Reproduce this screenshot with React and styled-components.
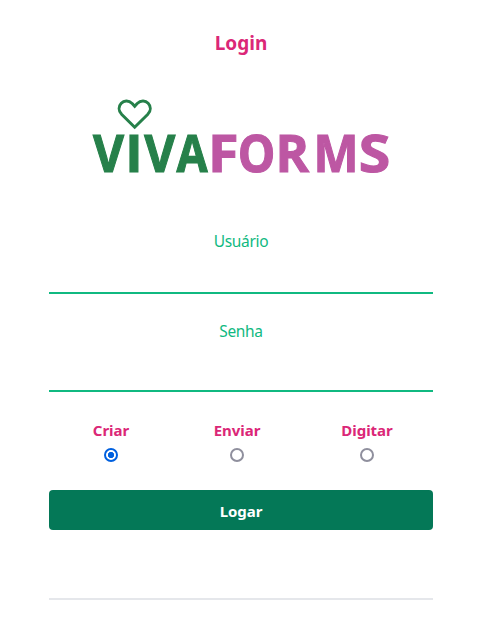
import React from "react";
import styled, { createGlobalStyle } from "styled-components";

const GlobalStyle = createGlobalStyle`
  *, *::before, *::after { box-sizing: border-box; }
  body {
    margin: 0;
    background: #fff;
    font-family: "Noto Sans", "Segoe UI", sans-serif;
    font-size: 15.5px;
    line-height: 24px;
  }
`;

const Page = styled.main`
  display: flex;
  flex-direction: column;
  width: 384px;
  height: 635px;
  margin-left: 49px;
  padding-top: 29px;
`;

const Title = styled.h1`
  margin: 0 0 40px;
  color: #db2777;
  font-size: 19px;
  font-weight: 700;
  line-height: 28px;
  letter-spacing: 0;
  text-align: center;
`;

const Logo = styled.svg`
  display: block;
  width: 310px;
  height: 100px;
  margin: 0 0 32px 42px;
  overflow: visible;
  font-family: "Open Sans", sans-serif;
  font-size: 52.5px;
  font-weight: 700;
`;

const Form = styled.form`
  display: flex;
  flex-direction: column;
`;

const Field = styled.label`
  display: flex;
  flex-direction: column;
  height: ${(p) => p.$height}px;
  margin-bottom: ${(p) => p.$gap}px;
  color: #10b981;
  text-align: center;
  letter-spacing: -0.35px;
`;

const Input = styled.input`
  flex: 1;
  min-height: 0;
  width: 100%;
  border: 0;
  border-bottom: 2px solid #10b981;
  outline: 0;
  padding: 8px;
  background: transparent;
  font: inherit;
`;

const Options = styled.div`
  display: grid;
  grid-template-columns: 124px 128px 132px;
  margin-bottom: 28px;
`;

const Option = styled.label`
  display: flex;
  flex-direction: column;
  align-items: center;
  gap: 6px;
  color: #db2777;
  font-size: 15px;
  font-weight: 700;
  line-height: 24px;
  letter-spacing: -0.05px;
`;

const Radio = styled.input`
  appearance: none;
  width: 14px;
  height: 14px;
  margin: 0;
  border: 2px solid ${(p) => (p.checked ? "#0060df" : "#8f8f9d")};
  border-radius: 50%;
  background: ${(p) =>
    p.checked ? "radial-gradient(circle, #0060df 2.8px, #fff 3.5px)" : "#fff"};
`;

const Submit = styled.button`
  height: 40px;
  border: 0;
  border-radius: 4px;
  padding: 1px 0 0;
  background: #047857;
  color: #fff;
  font: inherit;
  font-size: 15px;
  font-weight: 700;
  letter-spacing: -0.05px;
`;

const Divider = styled.hr`
  width: 100%;
  margin: 68px 0 0;
  border: 0;
  border-top: 2px solid #e5e7eb;
`;

const GREEN = "#26804a";
const PINK = "#bd57a3";

const LETTERS = [
  { char: "V", x: 2.1, scale: 0.91, color: GREEN },
  { char: "I", x: 34.3, scale: 1, color: GREEN },
  { char: "V", x: 53.2, scale: 0.91, color: GREEN },
  { char: "A", x: 85.4, scale: 0.86, color: GREEN },
  { char: "F", x: 116.9, scale: 1.06, color: PINK },
  { char: "O", x: 146.7, scale: 0.9, color: PINK },
  { char: "R", x: 184.5, scale: 0.97, color: PINK },
  { char: "M", x: 222.6, scale: 0.91, color: PINK },
  { char: "S", x: 267.8, scale: 1.09, color: PINK },
];

const MODES = ["Criar", "Enviar", "Digitar"];

export default function App() {
  const [mode, setMode] = React.useState("Criar");
  return (
    <>
      <GlobalStyle />
      <Page>
        <Title>Login</Title>
        <Logo viewBox="0 0 310 100" role="img" aria-label="VIVAFORMS">
          <path
            d="M43.7 30.2 L30.8 17.5 C23.2 9.6 33.5-.8 41.2 6.5 L43.7 9.2 L46.2 6.5 C53.9-.8 64.2 9.6 56.6 17.5 Z"
            fill="none"
            stroke={GREEN}
            strokeWidth="3"
          />
          {LETTERS.map(({ char, x, scale, color }, i) => (
            <text
              key={i}
              transform={`translate(${x} 75.2) scale(${scale} 1)`}
              fill={color}
              stroke={color}
              strokeWidth="1.1"
            >
              {char}
            </text>
          ))}
        </Logo>
        <Form onSubmit={(e) => e.preventDefault()}>
          <Field $height={65} $gap={25}>
            Usuário
            <Input type="text" />
          </Field>
          <Field $height={73} $gap={26}>
            Senha
            <Input type="password" />
          </Field>
          <Options>
            {MODES.map((m) => (
              <Option key={m}>
                {m}
                <Radio
                  type="radio"
                  name="mode"
                  checked={mode === m}
                  onChange={() => setMode(m)}
                />
              </Option>
            ))}
          </Options>
          <Submit type="submit">Logar</Submit>
        </Form>
        <Divider />
      </Page>
    </>
  );
}
